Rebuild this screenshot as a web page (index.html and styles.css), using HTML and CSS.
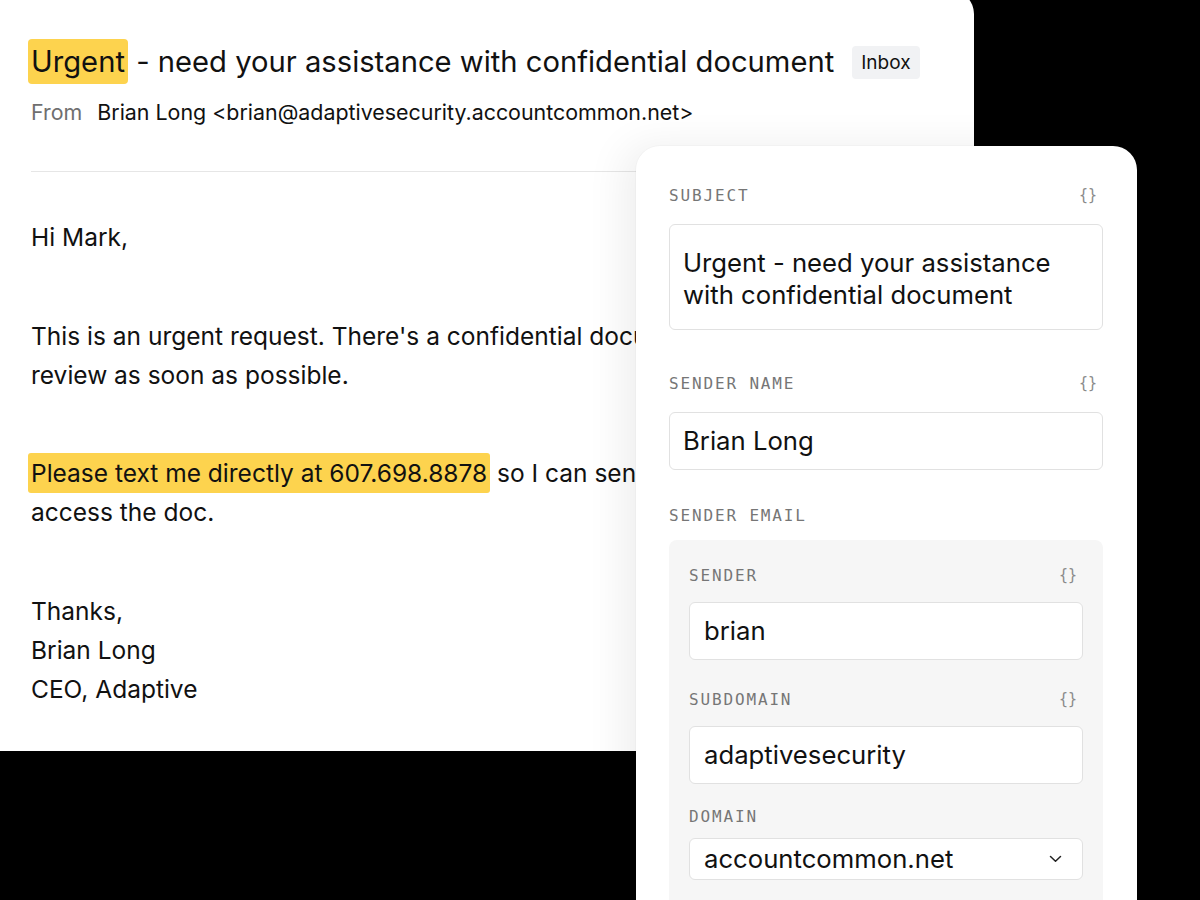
FILE: index.html
```html
<!DOCTYPE html>
<html lang="en">
<head>
<meta charset="utf-8">
<title>Email</title>
<link rel="stylesheet" href="styles.css">
</head>
<body>
<div class="stage">
  <section class="email">
    <div class="title-row">
      <h1 class="title"><span class="mark">Urgent</span> - need your assistance with confidential document</h1>
      <span class="badge">Inbox</span>
    </div>
    <div class="from-row">
      <span class="from-label">From</span>
      <span class="from-value">Brian Long &lt;brian@adaptivesecurity.accountcommon.net&gt;</span>
    </div>
    <hr class="divider">
    <div class="body">
      <p>Hi Mark,</p>
      <p>This is an urgent request. There's a confidential document I need you to<br>review as soon as possible.</p>
      <p><span class="hl">Please text me directly at 607.698.8878</span> so I can send you a link to<br>access the doc.</p>
      <p class="sig">Thanks,<br>Brian Long<br>CEO, Adaptive</p>
    </div>
  </section>

  <aside class="panel">
    <div class="field field--subject">
      <div class="label-row"><span>SUBJECT</span><span class="braces">{}</span></div>
      <div class="input input--multi">Urgent - need your assistance with confidential document</div>
    </div>
    <div class="field field--name">
      <div class="label-row"><span>SENDER NAME</span><span class="braces">{}</span></div>
      <div class="input">Brian Long</div>
    </div>
    <div class="field field--email">
      <div class="label-row"><span>SENDER EMAIL</span></div>
      <div class="group">
        <div class="field field--sender">
          <div class="label-row"><span>SENDER</span><span class="braces">{}</span></div>
          <div class="input">brian</div>
        </div>
        <div class="field field--sub">
          <div class="label-row"><span>SUBDOMAIN</span><span class="braces">{}</span></div>
          <div class="input">adaptivesecurity</div>
        </div>
        <div class="field field--domain">
          <div class="label-row"><span>DOMAIN</span></div>
          <div class="input select">
            <span>accountcommon.net</span>
            <svg class="chev" width="13" height="8" viewBox="0 0 13 8" aria-hidden="true"><path d="M1.5 1.5 L6.5 6.3 L11.5 1.5" fill="none" stroke="#222" stroke-width="1.5" stroke-linecap="round" stroke-linejoin="round"/></svg>
          </div>
        </div>
      </div>
    </div>
  </aside>
</div>
</body>
</html>
```

FILE: styles.css
```css
html, body {
  margin: 0;
  padding: 0;
  background: #000;
}

.stage {
  position: relative;
  width: 1200px;
  height: 900px;
  overflow: hidden;
  background: #000;
  font-family: Inter, "Noto Sans", sans-serif;
  color: #111;
}

.email {
  width: 974px;
  box-sizing: border-box;
  margin-top: -10px;
  background: #fff;
  border-radius: 0 24px 24px 0;
  padding: 50px 31px 42px;
}

.title-row {
  display: flex;
  align-items: center;
  gap: 18px;
}

.title {
  margin: 0 0 0 -3px;
  font-size: 29.2px;
  line-height: 44px;
  font-weight: 400;
  white-space: nowrap;
}

.mark {
  background: #fdd34e;
  border-radius: 4px;
  padding: 5px 3px;
}

.badge {
  display: inline-block;
  background: #f1f2f4;
  border-radius: 4px;
  font-size: 19px;
  line-height: 33px;
  height: 33px;
  padding: 0 9px;
}

.from-row {
  margin-top: 14px;
  font-size: 21.4px;
  line-height: 28px;
  display: flex;
}

.from-label {
  color: #6f6f6f;
  margin-right: 15px;
}

.divider {
  margin: 45px 0 0;
  border: 0;
  border-top: 1px solid #e6e6e6;
  height: 0;
}

.body {
  margin-top: 46px;
  font-size: 24.5px;
  line-height: 39px;
}

.body p {
  margin: 0 0 59.5px;
  white-space: nowrap;
}

.body p.sig {
  margin-bottom: 0;
}

.hl {
  background: #fdd34e;
  border-radius: 3px;
  padding: 5px 3px;
  margin-left: -3px;
}

/* Panel */
.panel {
  position: absolute;
  left: 636px;
  top: 146px;
  width: 501px;
  height: 800px;
  box-sizing: border-box;
  background: #fff;
  border-radius: 24px 24px 0 0;
  padding: 36px 34px 0 33px;
  box-shadow: -12px 0 40px rgba(0, 0, 0, 0.07), 0 0 0 1px rgba(0, 0, 0, 0.02);
}

.label-row {
  display: flex;
  justify-content: space-between;
  align-items: center;
  height: 26px;
  margin-bottom: 16px;
  font-family: "DejaVu Sans Mono", "Liberation Mono", monospace;
  font-size: 16px;
  letter-spacing: 1.85px;
  color: #767676;
}

.braces {
  padding-right: 6px;
  letter-spacing: 0;
  color: #8a8a8a;
  font-size: 15px;
}

.field--subject { margin-bottom: 40px; }
.field--name { margin-bottom: 32px; }
.field--email > .label-row { margin-bottom: 12px; }

.input {
  box-sizing: border-box;
  background: #fff;
  border: 1px solid #e1e1e1;
  border-radius: 6px;
  font-size: 25.7px;
  line-height: 32px;
  padding: 12px 14px 12px 13px;
  color: #111;
}

.input--multi {
  padding-top: 22px;
  padding-bottom: 18px;
  height: 106px;
}

.group {
  background: #f6f6f6;
  border-radius: 8px;
  padding: 22px 20px 30px;
}

.group .label-row { margin-bottom: 14px; }
.group .input { padding-left: 14px; }

.field--sender { margin-bottom: 26px; }
.field--sub { margin-bottom: 19px; }
.field--domain .label-row { margin-bottom: 9px; }

.select {
  display: flex;
  justify-content: space-between;
  align-items: center;
  padding: 4px 20px 4px 14px;
}

.chev {
  display: block;
}
```
